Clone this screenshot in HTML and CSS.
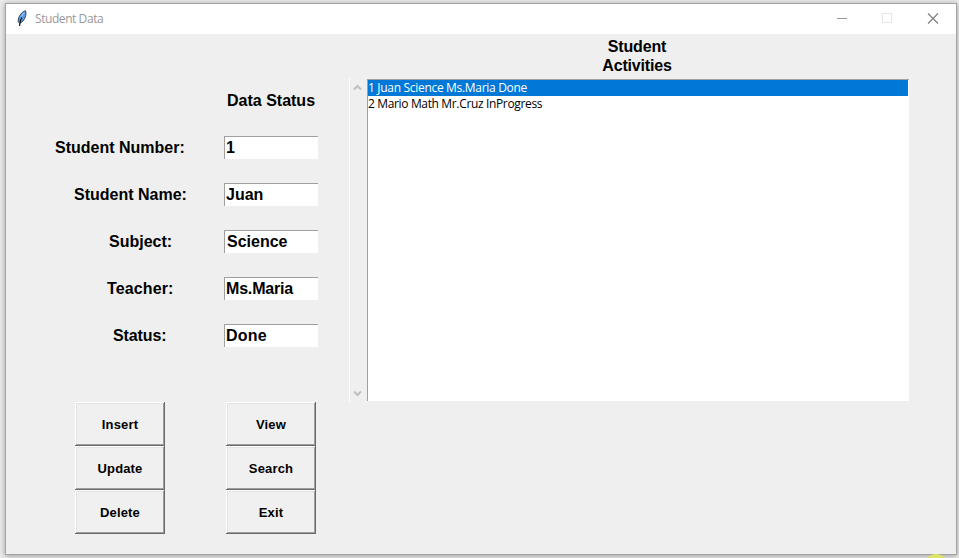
FILE: index.html
```html
<!DOCTYPE html>
<html lang="en">
<head>
<meta charset="utf-8">
<title>Student Data</title>
<link rel="stylesheet" href="styles.css">
</head>
<body>
<div class="window">
  <header class="titlebar">
    <svg class="feather" width="10" height="17" viewBox="0 0 10 17">
      <path d="M8.5 .8C5.8 1.2 2.8 4.5 1.6 8.2L1.2 11.5L2.6 13.2C6 12 8.5 8.5 9 3.5Z" fill="#5a9ee8" stroke="#26323f" stroke-width=".9"/>
      <path d="M5 7.5L3.4 10.5L2.5 16" fill="none" stroke="#111" stroke-width="1.2"/>
      <path d="M7.4 2.5L4.2 6.5" stroke="#a8d0fa" stroke-width="1"/>
    </svg>
    <span class="title">Student Data</span>
    <svg class="controls" width="102" height="12" viewBox="0 0 102 12" fill="none" shape-rendering="crispEdges">
      <path d="M0 5.5H10" stroke="#999"/>
      <rect x="45.5" y=".5" width="9" height="9" stroke="#e6e6e6"/>
      <path d="M91 .5L101 10.5M101 .5L91 10.5" stroke="#808080" stroke-width="1.2" shape-rendering="auto"/>
    </svg>
  </header>
  <main class="content">
    <section class="left">
      <h2 class="heading">Data Status</h2>
      <div class="form">
        <label class="number">Student Number:</label><div class="entry">1</div>
        <label class="name">Student Name:</label><div class="entry">Juan</div>
        <label class="subject">Subject:</label><div class="entry entry-indent">Science</div>
        <label class="teacher">Teacher:</label><div class="entry entry-teacher">Ms.Maria</div>
        <label class="status">Status:</label><div class="entry entry-status">Done</div>
      </div>
      <div class="buttons">
        <button>Insert</button><button>View</button>
        <button>Update</button><button>Search</button>
        <button>Delete</button><button>Exit</button>
      </div>
    </section>
    <section class="right">
      <h2 class="activities">Student<br>Activities</h2>
      <div class="listing">
        <div class="scrollbar">
          <svg width="9" height="7" viewBox="0 0 9 7"><path d="M1 5.5L4.5 2L8 5.5" fill="none" stroke="#bfbfbf" stroke-width="2"/></svg>
          <svg width="9" height="7" viewBox="0 0 9 7"><path d="M1 1.5L4.5 5L8 1.5" fill="none" stroke="#bfbfbf" stroke-width="2"/></svg>
        </div>
        <div class="list">
          <div class="row selected"><span>1 Juan Science Ms.Maria Done</span></div>
          <div class="row second"><span>2 Mario Math Mr.Cruz InProgress</span></div>
        </div>
      </div>
    </section>
  </main>
</div>
<div class="pointer"></div>
</body>
</html>
```

FILE: styles.css
```css
* { box-sizing: border-box; }
html { height: 100%; }
body {
  margin: 0;
  height: 558px;
  padding: 3px 0 0 5px;
  overflow: hidden;
  position: relative;
  background: #ececec;
  font-family: "Liberation Sans", Arial, sans-serif;
  color: #000;
}
.window {
  width: 952px;
  height: 552px;
  border: 1px solid #a3a3a3;
  background: #efefef;
  box-shadow: 0 1px 6px rgba(0, 0, 0, .35);
}
.titlebar {
  display: flex;
  height: 30px;
  padding: 0 17px 0 11px;
  background: #fff;
}
.feather { margin-top: 6px; }
.title {
  margin-left: 8px;
  font: 12px/30px "Open Sans", "Noto Sans", sans-serif;
  letter-spacing: -.43px;
  color: #999;
}
.controls { margin: 9px 0 0 auto; }
.content { display: flex; height: 520px; }
.left { width: 343px; }
.heading {
  margin: 57px 0 0 221px;
  font-size: 16px;
  line-height: 19px;
  white-space: nowrap;
}
.form {
  display: grid;
  grid-template-columns: 218px 94px;
  grid-auto-rows: 23px;
  row-gap: 24px;
  margin-top: 26px;
  font-size: 16px;
  line-height: 23px;
  font-weight: bold;
}
.number { padding-left: 49px; }
.name { padding-left: 68px; }
.subject { padding-left: 103px; }
.teacher { padding-left: 101px; letter-spacing: .13px; }
.status { padding-left: 107px; letter-spacing: -.1px; }
.entry {
  padding-left: 1px;
  border-top: 1px solid #a0a0a0;
  border-left: 1px solid #a0a0a0;
  background: #fff;
  line-height: 21px;
}
.entry-indent { padding-left: 2px; }
.entry-teacher { letter-spacing: -.18px; }
.entry-status { letter-spacing: .25px; }
.buttons {
  display: grid;
  grid-template-columns: 90px 90px;
  grid-auto-rows: 44px;
  column-gap: 61px;
  margin: 55px 0 0 69px;
}
button {
  margin: 0;
  padding: 0;
  border: 0;
  border-radius: 0;
  background: #f0f0f0;
  box-shadow: inset -1px -1px #696969, inset 1px 1px #fff, inset -2px -2px #a0a0a0, inset 2px 2px #e3e3e3;
  font: bold 13px/15px "Liberation Sans", Arial, sans-serif;
  letter-spacing: .15px;
  color: #000;
}
.right { width: 560px; }
.activities {
  margin: 3px 0 0 16px;
  width: 544px;
  text-align: center;
  font-size: 16px;
  line-height: 19px;
  letter-spacing: -.18px;
}
.listing { display: flex; align-items: center; height: 324px; margin-top: 3px; }
.scrollbar {
  display: flex;
  flex-direction: column;
  justify-content: space-between;
  width: 18px;
  height: 324px;
  padding: 6px 0 5px 3px;
  border-left: 1px solid #fff;
}
.list {
  width: 542px;
  height: 322px;
  padding: 0 1px 0 0;
  border-top: 1px solid #a0a0a0;
  border-left: 1px solid #a0a0a0;
  background: #fff;
}
.row {
  height: 16px;
  font: 12px/16px "Open Sans", "Noto Sans", sans-serif;
  letter-spacing: -.31px;
  white-space: nowrap;
}
.second { letter-spacing: -.35px; }
.selected { background: #0078d7; color: #fff; }
.pointer {
  position: absolute;
  left: 924px;
  top: 554px;
  width: 24px;
  height: 24px;
  border-radius: 50%;
  background: #dfe667;
}
```
